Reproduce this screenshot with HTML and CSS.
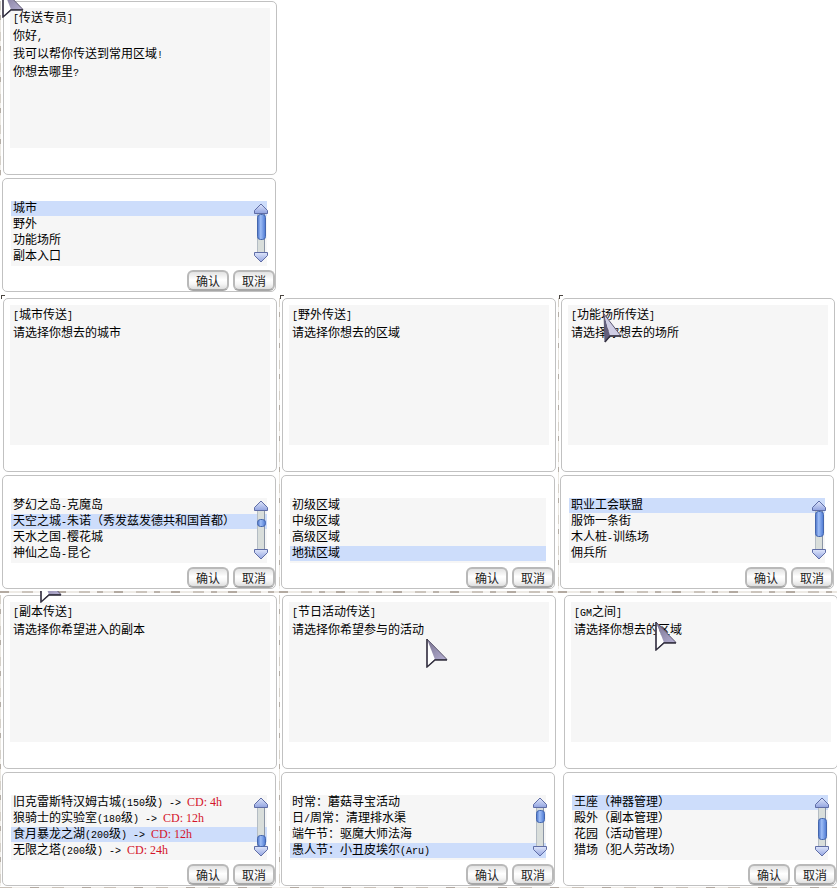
FILE: index.html
```
<!DOCTYPE html>
<html lang="zh-CN">
<head>
<meta charset="utf-8">
<title>传送专员</title>
<link rel="stylesheet" href="styles.css">
</head>
<body>
<svg class="defs" aria-hidden="true">
  <defs>
    <linearGradient id="face" x1="0" y1="0" x2="0" y2="1"><stop offset="0" stop-color="#dfe6fb"/><stop offset="1" stop-color="#92a4e0"/></linearGradient>
    <linearGradient id="pill" x1="0" y1="0" x2="1" y2="0"><stop offset="0" stop-color="#4a72c8"/><stop offset="0.4" stop-color="#9dbdf6"/><stop offset="1" stop-color="#4c78d2"/></linearGradient>
    <linearGradient id="wing" x1="0" y1="0" x2="1" y2="1"><stop offset="0" stop-color="#77718f"/><stop offset="1" stop-color="#b5afd2"/></linearGradient>
    <symbol id="rail" viewBox="0 0 14 60">
      <rect x="3" y="9" width="8" height="42" fill="#d9dedb"/>
      <path d="M3.5 9v42" stroke="#b4bcc4"/>
      <path d="M10.500 9v42" stroke="#8b95a5"/>
      <path d="M7 1L13.500 7.500V10.500H0.500V7.500Z" fill="url(#face)" stroke="#5f6da6"/>
      <path d="M7 59L13.500 52.500V49.500H0.500V52.500Z" fill="url(#face)" stroke="#5f6da6"/>
    </symbol>
    <symbol id="cursor" viewBox="0 0 22 30">
      <path d="M1 1V29L9 21.500Z" fill="#fff"/>
      <path d="M1 1L9 21.500H21Z" fill="url(#wing)"/>
      <path d="M1 1V29L9 21.500H21Z" fill="none" stroke="#5d5870"/>
      <path d="M1 1V29L9 22H21" fill="none" stroke="#33303f" stroke-width="1.400"/>
    </symbol>
    <symbol id="cursor-turned" viewBox="0 0 19 30">
      <path d="M1 1L2 29L7 23Z" fill="#625e7c"/>
      <path d="M1 1L7 23H18Z" fill="#cfcde4"/>
      <path d="M1 1L2 29L7 23H18Z" fill="none" stroke="#5c5872"/>
      <path d="M2 29L7 23H18" fill="none" stroke="#33303f" stroke-width="1.400"/>
    </symbol>
  </defs>
</svg>
<main class="board">
  <section class="dialog dialog--first">
    <div class="panel talk"><div class="talk-text">
      <p><span class="en">[</span>传送专员<span class="en">]</span></p>
      <p>你好<span class="en">,</span></p>
      <p>我可以帮你传送到常用区域<span class="en">!</span></p>
      <p>你想去哪里<span class="en">?</span></p>
    </div></div>
    <div class="panel choice">
      <ul class="options" role="listbox" aria-label="传送专员">
        <li role="option" aria-selected="true">城市</li>
        <li role="option">野外</li>
        <li role="option">功能场所</li>
        <li role="option">副本入口</li>
      </ul>
      <svg class="scroll" viewBox="0 0 14 60" aria-hidden="true"><use href="#rail"/><rect x="3.500" y="11.500" width="8" height="25" rx="3" fill="url(#pill)" stroke="#4466ad"/></svg>
      <div class="actions"><button type="button">确认</button><button type="button">取消</button></div>
    </div>
    <svg class="cursor cursor--corner" viewBox="0 0 22 30" aria-hidden="true"><use href="#cursor"/></svg>
  </section>

  <section class="dialog dialog--row-start dialog--mark">
    <div class="panel talk"><div class="talk-text">
      <p><span class="en">[</span>城市传送<span class="en">]</span></p>
      <p>请选择你想去的城市</p>
    </div></div>
    <div class="panel choice">
      <ul class="options" role="listbox" aria-label="城市传送">
        <li role="option">梦幻之岛<span class="en">-</span>克魔岛</li>
        <li role="option" aria-selected="true">天空之城<span class="en">-</span>朱诺（秀发兹发德共和国首都）</li>
        <li role="option">天水之国<span class="en">-</span>樱花城</li>
        <li role="option">神仙之岛<span class="en">-</span>昆仑</li>
      </ul>
      <svg class="scroll" viewBox="0 0 14 60" aria-hidden="true"><use href="#rail"/><rect x="3.500" y="19.500" width="8" height="7" rx="3" fill="url(#pill)" stroke="#4466ad"/></svg>
      <div class="actions"><button type="button">确认</button><button type="button">取消</button></div>
    </div>
  </section>

  <section class="dialog dialog--scene dialog--mark">
    <div class="panel talk"><div class="talk-text">
      <p><span class="en">[</span>野外传送<span class="en">]</span></p>
      <p>请选择你想去的区域</p>
    </div></div>
    <div class="panel choice">
      <ul class="options" role="listbox" aria-label="野外传送">
        <li role="option">初级区域</li>
        <li role="option">中级区域</li>
        <li role="option">高级区域</li>
        <li role="option" aria-selected="true">地狱区域</li>
      </ul>
      <div class="actions"><button type="button">确认</button><button type="button">取消</button></div>
    </div>
  </section>

  <section class="dialog dialog--scene dialog--mark">
    <div class="panel talk"><div class="talk-text">
      <p><span class="en">[</span>功能场所传送<span class="en">]</span></p>
      <p>请选择你想去的场所</p>
    </div></div>
    <div class="panel choice">
      <ul class="options" role="listbox" aria-label="功能场所传送">
        <li role="option" aria-selected="true">职业工会联盟</li>
        <li role="option">服饰一条街</li>
        <li role="option">木人桩<span class="en">-</span>训练场</li>
        <li role="option">佣兵所</li>
      </ul>
      <svg class="scroll" viewBox="0 0 14 60" aria-hidden="true"><use href="#rail"/><rect x="3.500" y="11.500" width="8" height="25" rx="3" fill="url(#pill)" stroke="#4466ad"/></svg>
      <div class="actions"><button type="button">确认</button><button type="button">取消</button></div>
    </div>
    <svg class="cursor cursor--turned" viewBox="0 0 19 30" aria-hidden="true"><use href="#cursor-turned"/></svg>
  </section>

  <section class="dialog dialog--scene dialog--ground">
    <div class="panel talk"><div class="talk-text">
      <p><span class="en">[</span>副本传送<span class="en">]</span></p>
      <p>请选择你希望进入的副本</p>
    </div></div>
    <div class="panel choice">
      <ul class="options" role="listbox" aria-label="副本传送">
        <li role="option">旧克雷斯特汉姆古城<span class="en">(150</span>级<span class="en">) -&gt; </span><span class="cooldown">CD: 4h</span></li>
        <li role="option">狼骑士的实验室<span class="en">(180</span>级<span class="en">) -&gt; </span><span class="cooldown">CD: 12h</span></li>
        <li role="option" aria-selected="true">食月暴龙之湖<span class="en">(200</span>级<span class="en">) -&gt; </span><span class="cooldown">CD: 12h</span></li>
        <li role="option">无限之塔<span class="en">(200</span>级<span class="en">) -&gt; </span><span class="cooldown">CD: 24h</span></li>
      </ul>
      <svg class="scroll" viewBox="0 0 14 60" aria-hidden="true"><use href="#rail"/><rect x="3.500" y="38.500" width="8" height="11" rx="3" fill="url(#pill)" stroke="#4466ad"/></svg>
      <div class="actions"><button type="button">确认</button><button type="button">取消</button></div>
    </div>
    <svg class="cursor cursor--cut" viewBox="0 18 22 12" aria-hidden="true"><use href="#cursor" width="22" height="30"/></svg>
  </section>

  <section class="dialog dialog--scene dialog--ground">
    <div class="panel talk"><div class="talk-text">
      <p><span class="en">[</span>节日活动传送<span class="en">]</span></p>
      <p>请选择你希望参与的活动</p>
    </div></div>
    <div class="panel choice">
      <ul class="options" role="listbox" aria-label="节日活动传送">
        <li role="option">时常：蘑菇寻宝活动</li>
        <li role="option">日<span class="en">/</span>周常：清理排水渠</li>
        <li role="option">端午节：驱魔大师法海</li>
        <li role="option" aria-selected="true">愚人节：小丑皮埃尔<span class="en">(Aru)</span></li>
      </ul>
      <svg class="scroll" viewBox="0 0 14 60" aria-hidden="true"><use href="#rail"/><rect x="3.500" y="13.500" width="8" height="12" rx="3" fill="url(#pill)" stroke="#4466ad"/></svg>
      <div class="actions"><button type="button">确认</button><button type="button">取消</button></div>
    </div>
    <svg class="cursor cursor--middle" viewBox="0 0 22 30" aria-hidden="true"><use href="#cursor"/></svg>
  </section>

  <section class="dialog dialog--ground dialog--shifted">
    <div class="panel talk"><div class="talk-text">
      <p><span class="en">[GM</span>之间<span class="en">]</span></p>
      <p>请选择你想去的区域</p>
    </div></div>
    <div class="panel choice">
      <ul class="options" role="listbox" aria-label="GM之间">
        <li role="option" aria-selected="true">王座（神器管理）</li>
        <li role="option">殿外（副本管理）</li>
        <li role="option">花园（活动管理）</li>
        <li role="option">猎场（犯人劳改场）</li>
      </ul>
      <svg class="scroll" viewBox="0 0 14 60" aria-hidden="true"><use href="#rail"/><rect x="3.500" y="21.500" width="8" height="21" rx="3" fill="url(#pill)" stroke="#4466ad"/></svg>
      <div class="actions"><button type="button">确认</button><button type="button">取消</button></div>
    </div>
    <svg class="cursor cursor--text" viewBox="0 0 22 30" aria-hidden="true"><use href="#cursor"/></svg>
  </section>
</main>
</body>
</html>
```
FILE: styles.css
```
* {
  box-sizing: border-box;
}

body {
  margin: 0;
  background: #fff;
  color: #000;
  font-family: "Noto Sans CJK SC", sans-serif;
  font-size: 12px;
  line-height: 16px;
}

p,
ul {
  margin: 0;
  padding: 0;
}

.defs {
  position: absolute;
  width: 0;
  height: 0;
}

.board {
  display: grid;
  grid-template-columns: repeat(3, minmax(0, 1fr));
  row-gap: 6px;
  padding: 1px 0 2px;
  overflow: hidden;
  background: repeating-linear-gradient(90deg, #c9c1b8 0 12px, #f1eeea 12px 30px, #b3aaa2 30px 39px, #efece7 39px 52px) 0 100% / 100% 1px no-repeat;
}

.dialog {
  position: relative;
  display: flex;
  flex-direction: column;
  gap: 3px;
  padding: 0 2px 0 3px;
}

.dialog--first,
.dialog--row-start {
  grid-column: 1;
}

.dialog--shifted {
  padding: 0 0 0 6px;
  margin-right: -1px;
}

/* Slivers of the game scene between the windows */
.dialog--scene::before,
.dialog--first::before {
  content: "";
  position: absolute;
  top: 0;
  bottom: 0;
  left: 0;
  width: 1px;
  background: repeating-linear-gradient(#d5d0c8 0 9px, #f1efeb 9px 14px, #b5aea6 14px 19px, #eae7e1 19px 31px);
}

.dialog--first::before {
  bottom: 116px;
}

.dialog--ground::after {
  content: "";
  position: absolute;
  top: -4px;
  left: 0;
  right: 0;
  height: 2px;
  background: repeating-linear-gradient(90deg, #b3aaa1 0 9px, #eeebe6 9px 22px, #cbc4bc 22px 33px, #f3f0ec 33px 40px, #bbb3ab 40px 46px, #eae6e0 46px 57px);
}

.dialog--mark::after {
  content: "";
  position: absolute;
  top: -3px;
  left: 1px;
  width: 3px;
  height: 3px;
  border-top: 1px solid #4a4540;
  border-left: 1px solid #4a4540;
}

.panel {
  border: 1px solid #c1c1c1;
  border-radius: 5px;
  background: #fff;
}

.talk {
  padding: 6px 6px 26px;
}

.talk-text {
  min-height: 140px;
  padding: 0 3px;
  background: #f6f6f6;
  line-height: 18px;
}

.choice {
  position: relative;
  margin: 0 1px 0 -1px;
  padding: 22px 8px 0;
}

.options {
  list-style: none;
  padding-bottom: 1px;
  background: #f6f6f6;
}

.options li {
  height: 16px;
  padding-left: 2px;
  line-height: 12px;
  white-space: nowrap;
}

.options [aria-selected="true"] {
  background: linear-gradient(#cdddfb, #cdddfb) 0 0 / 100% 15px no-repeat;
}

.en {
  font-family: "Liberation Mono", monospace;
  font-size: 10px;
  line-height: 10px;
}

.cooldown {
  color: #d4142a;
  font-family: "Liberation Serif", serif;
  line-height: 10px;
}

.scroll {
  position: absolute;
  top: 24px;
  right: 7px;
  width: 14px;
  height: 60px;
}

.actions {
  display: flex;
  justify-content: flex-end;
  gap: 4px;
  margin: 4px -8px 0 0;
}

button {
  width: 42px;
  height: 21px;
  padding: 0;
  border: 2px solid #b9b9b9;
  border-bottom-color: #a6a6a6;
  border-radius: 6px;
  background: linear-gradient(#e2e2e2, #fff 45%, #f6f6f6 70%, #dedede);
  color: #222;
  font: inherit;
  line-height: 15px;
}

.cursor {
  position: absolute;
  width: 22px;
  height: 30px;
}

.cursor--corner {
  top: -13px;
  left: 2px;
}

.cursor--turned {
  top: 15px;
  left: 45px;
  width: 19px;
}

.cursor--cut {
  top: -4px;
  left: 40px;
  height: 12px;
  z-index: 1;
}

.cursor--middle {
  top: 43px;
  left: 147px;
}

.cursor--text {
  top: 26px;
  left: 97px;
}
```
